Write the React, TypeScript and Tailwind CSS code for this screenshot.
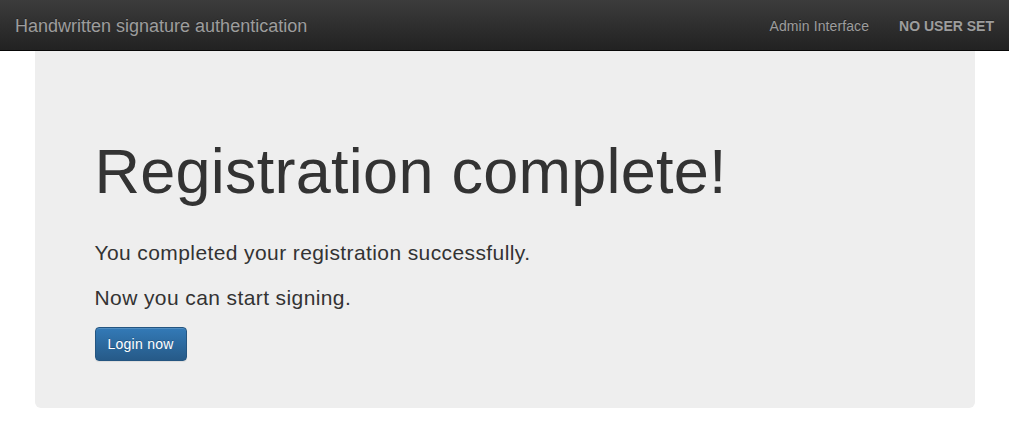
import React from 'react';

const App: React.FC = () => {
  return (
    <div className="min-h-screen bg-white font-['Liberation_Sans',Arial,sans-serif] text-[#333]">
      {/* Navbar */}
      <nav className="flex h-[51px] items-start justify-between border-b border-[#080808] bg-gradient-to-b from-[#3c3c3c] to-[#222]">
        <a className="block px-[15px] pt-[16px] pb-[14px] text-[18px] leading-[20px] text-[#9d9d9d] [text-shadow:0_-1px_0_rgba(0,0,0,0.25)]">
          Handwritten signature authentication
        </a>
        <ul className="flex">
          <li>
            <a className="block px-[15px] pt-[16px] pb-[14px] text-[14px] leading-[20px] tracking-[0.1px] text-[#9d9d9d] [text-shadow:0_-1px_0_rgba(0,0,0,0.25)]">
              Admin Interface
            </a>
          </li>
          <li>
            <a className="block pl-[15px] pr-[15px] pt-[16px] pb-[14px] text-[14px] font-bold leading-[20px] text-[#9d9d9d] [text-shadow:0_-1px_0_rgba(0,0,0,0.25)]">
              NO USER SET
            </a>
          </li>
        </ul>
      </nav>

      {/* Jumbotron */}
      <div className="mx-auto w-[970px] px-[15px]">
        <div className="flex flex-col items-start rounded-b-[6px] bg-[#eee] px-[60px] pt-[86px] pb-[47px]">
          <h1 className="text-[63px] leading-[69px] font-normal tracking-[0.25px]">Registration complete!</h1>
          <p className="mt-[32px] text-[21px] leading-[29px] tracking-[0.4px]">You completed your registration successfully.</p>
          <p className="mt-[16px] text-[21px] leading-[29px] tracking-[0.4px]">Now you can start signing.</p>
          <button className="mt-[15px] h-[34px] rounded-[4px] border border-[#245580] bg-gradient-to-b from-[#337ab7] to-[#265a88] px-[12px] text-[14px] leading-[20px] tracking-[0.25px] text-white [text-shadow:0_-1px_0_rgba(0,0,0,0.2)] shadow-[inset_0_1px_0_rgba(255,255,255,0.15),0_1px_1px_rgba(0,0,0,0.075)]">
            Login now
          </button>
        </div>
      </div>
    </div>
  );
};

export default App;
